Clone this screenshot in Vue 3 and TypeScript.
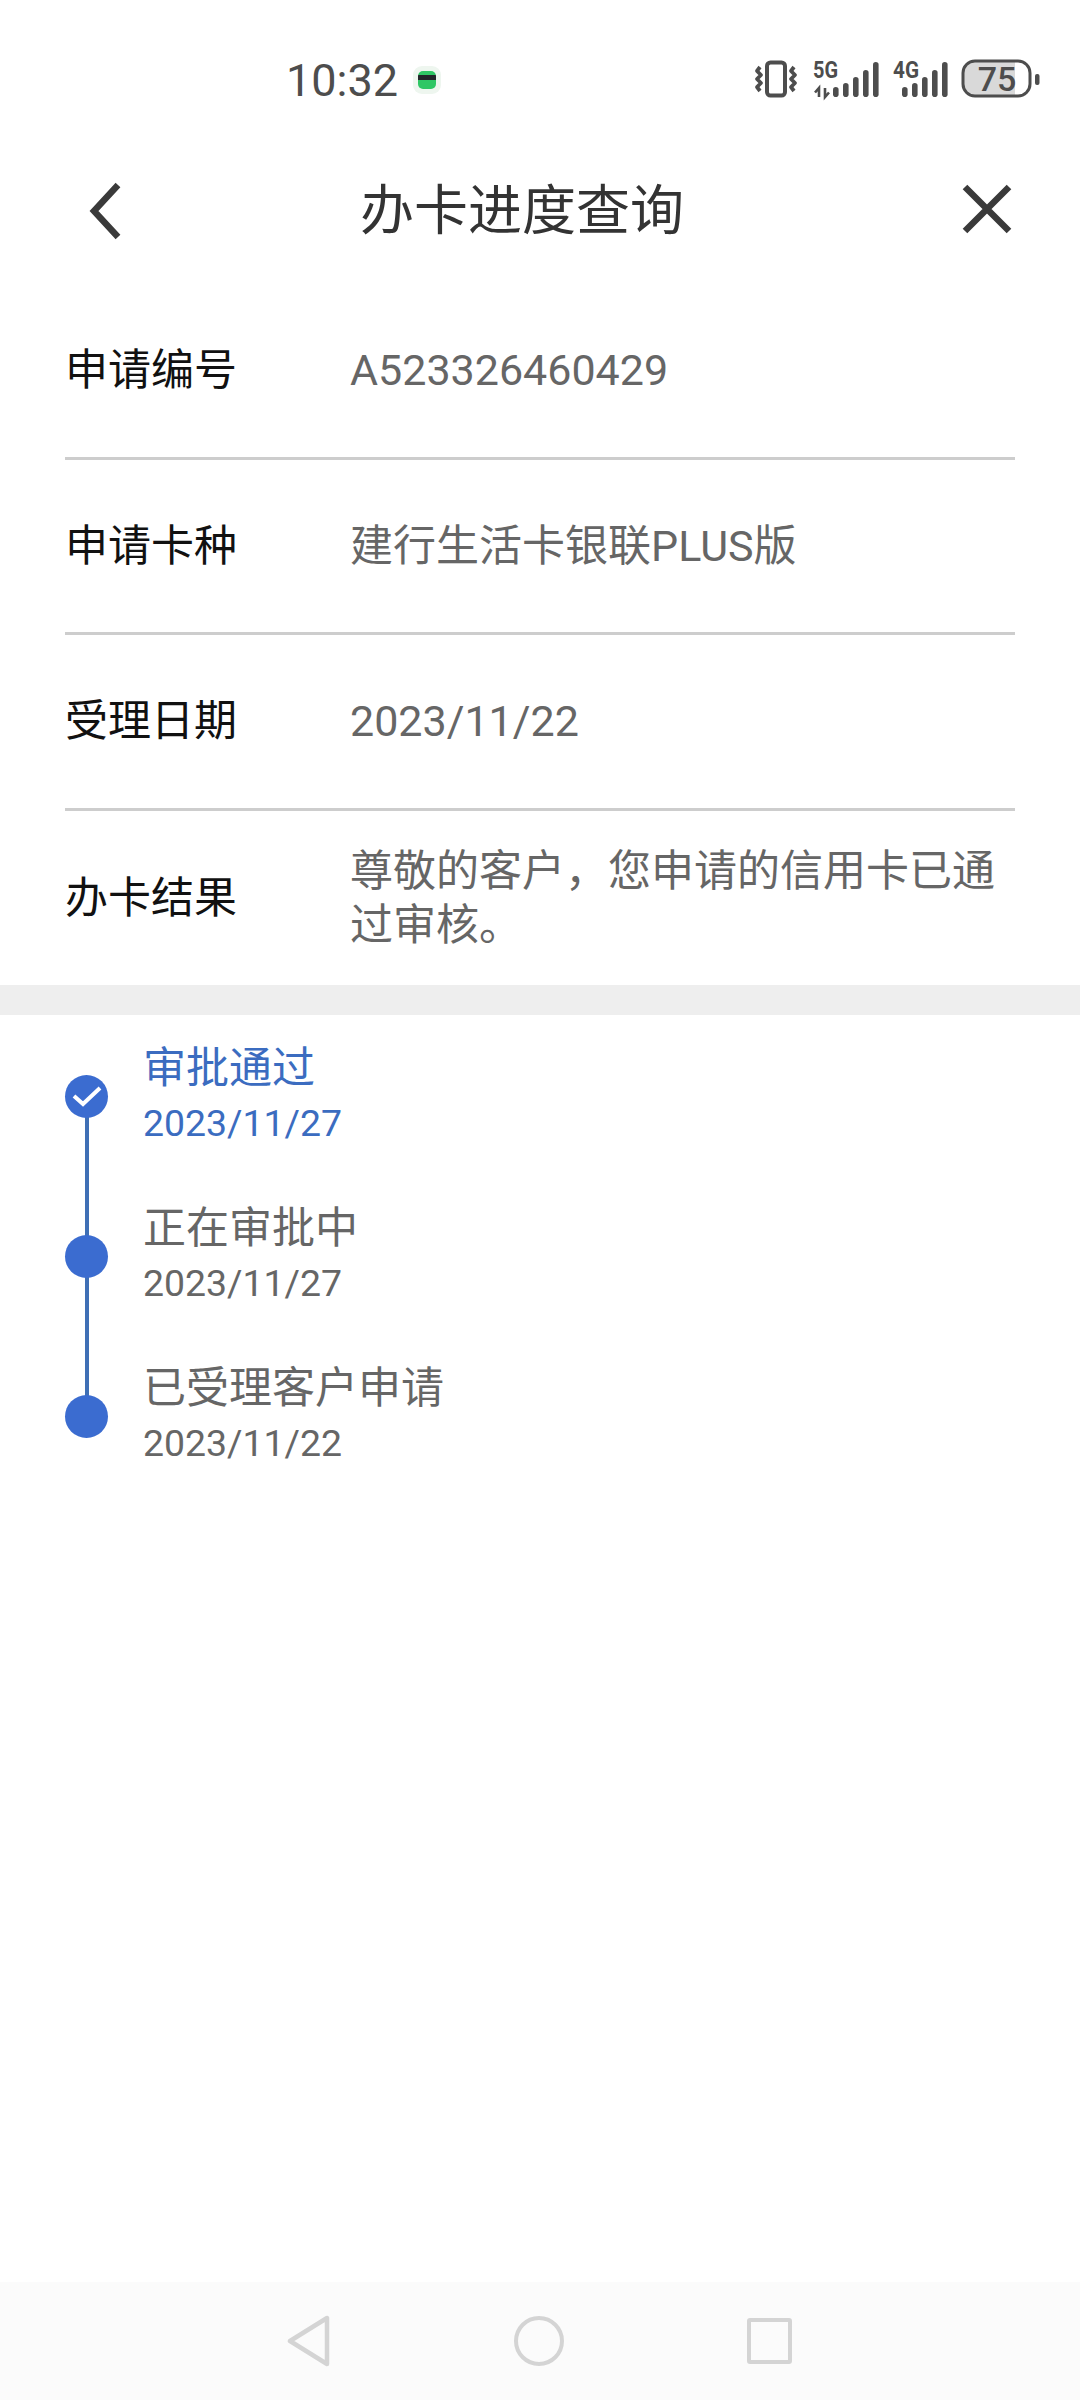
<script setup lang="ts">
interface Row {
  label: string
  value: string
}

interface Step {
  title: string
  date: string
  done?: boolean
}

const rows: Row[] = [
  { label: '申请编号', value: 'A523326460429' },
  { label: '申请卡种', value: '建行生活卡银联PLUS版' },
  { label: '受理日期', value: '2023/11/22' },
  { label: '办卡结果', value: '尊敬的客户，您申请的信用卡已通过审核。' },
]

const steps: Step[] = [
  { title: '审批通过', date: '2023/11/27', done: true },
  { title: '正在审批中', date: '2023/11/27' },
  { title: '已受理客户申请', date: '2023/11/22' },
]

const signal5g = [
  { x: 833, y: 87 },
  { x: 843, y: 83 },
  { x: 853, y: 77 },
  { x: 863, y: 70 },
  { x: 873, y: 62 },
]
const signal4g = [
  { x: 902, y: 87 },
  { x: 912, y: 83 },
  { x: 922, y: 77 },
  { x: 932, y: 70 },
  { x: 942, y: 62 },
]
</script>

<template>
  <div class="page">
    <div class="status-bar">
      <span class="time">10:32</span>
      <span class="app-dot"><i></i></span>
      <svg class="status-icons" width="290" height="44" viewBox="752 58 290 44">
        <g fill="none" stroke="#4d4d4d" stroke-width="3.8" stroke-linejoin="round">
          <rect x="767" y="62.5" width="18" height="33" rx="3.5" stroke-width="4" />
          <path d="M760 67l-3 4 4 4-4 4 4 4-4 4 3 4" />
          <path d="M794 67l-3 4 4 4-4 4 4 4-4 4 3 4" />
        </g>
        <text x="813" y="78" class="net" textLength="25" lengthAdjust="spacingAndGlyphs">5G</text>
        <path d="M819 97v-9l-4 4.5M825 88v9l4-4.5" fill="none" stroke="#4d4d4d" stroke-width="2.6" />
        <rect v-for="b in signal5g" :key="b.x" :x="b.x" :y="b.y" width="5.6" :height="97 - b.y" rx="2.8" fill="#4d4d4d" />
        <text x="893" y="78" class="net" textLength="26" lengthAdjust="spacingAndGlyphs">4G</text>
        <rect v-for="b in signal4g" :key="b.x" :x="b.x" :y="b.y" width="5.6" :height="97 - b.y" rx="2.8" fill="#4d4d4d" />
        <path d="M974 61.5h41v34h-41a11 11 0 0 1-11-11v-12a11 11 0 0 1 11-11z" fill="#d9d9d9" />
        <rect x="963" y="61" width="67" height="35" rx="12" fill="none" stroke="#4d4d4d" stroke-width="3" />
        <text x="997" y="91" class="batt" text-anchor="middle">75</text>
        <rect x="1035" y="74" width="4.5" height="11" rx="2" fill="#4d4d4d" />
      </svg>
    </div>

    <header class="nav-head">
      <svg class="back" width="34" height="58" viewBox="0 0 34 58">
        <path d="M30 3L6 29l24 26" fill="none" stroke="#3a3a3a" stroke-width="6.5" />
      </svg>
      <h1 class="title">办卡进度查询</h1>
      <svg width="50" height="50" viewBox="0 0 50 50">
        <path d="M3 3l44 44M47 3L3 47" fill="none" stroke="#3a3a3a" stroke-width="6.5" />
      </svg>
    </header>

    <section class="info">
      <div v-for="row in rows" :key="row.label" class="row">
        <span class="label">{{ row.label }}</span>
        <span class="value">{{ row.value }}</span>
      </div>
    </section>

    <div class="band"></div>

    <section class="timeline">
      <div v-for="step in steps" :key="step.title" class="step" :class="{ done: step.done }">
        <div class="node">
          <svg v-if="step.done" width="30" height="22" viewBox="0 0 30 22">
            <path d="M2 11l9 8L28 3" fill="none" stroke="#fff" stroke-width="4" />
          </svg>
        </div>
        <div class="step-text">
          <div class="step-title">{{ step.title }}</div>
          <div class="step-date">{{ step.date }}</div>
        </div>
      </div>
    </section>

    <footer class="sys-nav">
      <svg width="44" height="52" viewBox="0 0 44 52">
        <path d="M40 3v46L3 26z" fill="none" stroke="#d4d4d4" stroke-width="4.5" stroke-linejoin="round" />
      </svg>
      <span class="circle"></span>
      <span class="square"></span>
    </footer>
  </div>
</template>

<style>
html,
body {
  margin: 0;
  background: #fff;
}
</style>

<style scoped>
.page {
  width: 1080px;
  min-height: 2400px;
  display: flex;
  flex-direction: column;
  background: #fff;
  font-family: Roboto, "Noto Sans CJK SC", sans-serif;
}

.status-bar {
  height: 134px;
  padding: 26px 38px 0 286px;
  box-sizing: border-box;
  display: flex;
  align-items: center;
}
.time {
  font-size: 45px;
  color: #4d4d4d;
  line-height: 1;
}
.app-dot {
  width: 28px;
  height: 28px;
  margin-left: 15px;
  border-radius: 9px;
  background: #eef6ef;
  display: flex;
  align-items: center;
  justify-content: center;
}
.app-dot i {
  width: 18px;
  height: 18px;
  border-radius: 5px;
  background: linear-gradient(#2fc765 0 20%, #22262a 20% 50%, #2fc765 50%);
}
.status-icons {
  margin-left: auto;
  overflow: visible;
}
.net {
  font-size: 23px;
  font-weight: 700;
  fill: #4d4d4d;
}
.batt {
  font-size: 34px;
  font-weight: 500;
  fill: #4d4d4d;
}

.nav-head {
  height: 150px;
  padding: 0 68px 0 88px;
  box-sizing: border-box;
  display: flex;
  align-items: center;
  justify-content: space-between;
}
.back {
  margin-top: 3px;
}
.title {
  margin: 6px 40px 0 0;
  font-size: 54px;
  font-weight: 400;
  line-height: 64px;
  color: #333;
}

.info {
  padding: 0 65px;
}
.row {
  height: 175.5px;
  box-sizing: border-box;
  display: flex;
  align-items: center;
  border-bottom: 3px solid #cdcdcd;
}
.row:last-child {
  height: 174px;
  border-bottom: none;
}
.label {
  width: 285px;
  flex-shrink: 0;
  font-size: 43px;
  line-height: 54px;
  color: #111;
}
.value {
  font-size: 43px;
  line-height: 54px;
  color: #666;
}

.band {
  height: 30px;
  background: #eeeeee;
}

.timeline {
  padding: 0 65px;
}
.step {
  position: relative;
  height: 160px;
  display: flex;
  align-items: flex-start;
  gap: 35px;
}
.step:not(:last-child)::before {
  content: "";
  position: absolute;
  left: 20px;
  top: 82px;
  width: 4px;
  height: 160px;
  background: #3f6fb5;
}
.node {
  position: relative;
  width: 43px;
  height: 43px;
  margin-top: 60px;
  flex-shrink: 0;
  border-radius: 50%;
  background: #3b6cd0;
  display: flex;
  align-items: center;
  justify-content: center;
}
.step-text {
  padding-top: 25px;
  color: #666;
}
.step-title {
  font-size: 43px;
  line-height: 56px;
}
.step-date {
  font-size: 37.4px;
  line-height: 54px;
}
.done .step-text {
  color: #3b6cc0;
}

.sys-nav {
  margin-top: auto;
  height: 118px;
  padding-left: 287px;
  box-sizing: border-box;
  display: flex;
  align-items: center;
  gap: 183px;
  background: #fbfbfb;
}
.circle {
  width: 50px;
  height: 50px;
  box-sizing: border-box;
  border: 4.5px solid #d4d4d4;
  border-radius: 50%;
}
.square {
  width: 45px;
  height: 46px;
  box-sizing: border-box;
  border: 4.5px solid #d4d4d4;
  border-radius: 3px;
}
</style>
